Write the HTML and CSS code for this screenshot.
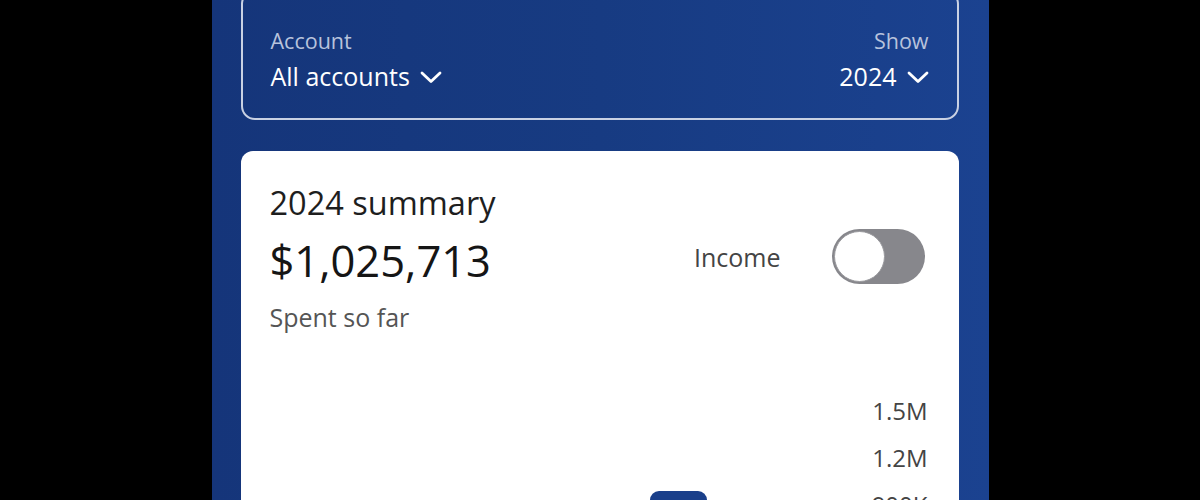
FILE: index.html
```html
<!DOCTYPE html>
<html lang="en">
<head>
<meta charset="utf-8">
<title>2024 summary</title>
<link rel="stylesheet" href="styles.css">
</head>
<body>
<div class="panel">
  <div class="filters">
    <div class="filter">
      <div class="filter-label">Account</div>
      <div class="filter-value">All accounts
        <svg class="chev" viewBox="0 0 22 13" width="22" height="13"><path d="M2 2 L11 10.5 L20 2" fill="none" stroke="#fff" stroke-width="2.8" stroke-linecap="round" stroke-linejoin="round"/></svg>
      </div>
    </div>
    <div class="filter filter-right">
      <div class="filter-label">Show</div>
      <div class="filter-value">2024
        <svg class="chev" viewBox="0 0 22 13" width="22" height="13"><path d="M2 2 L11 10.5 L20 2" fill="none" stroke="#fff" stroke-width="2.8" stroke-linecap="round" stroke-linejoin="round"/></svg>
      </div>
    </div>
  </div>

  <div class="card">
    <div class="card-title">2024 summary</div>
    <div class="amount-row">
      <div class="amount">$1,025,713</div>
      <div class="income">
        <span class="income-label">Income</span>
        <span class="toggle"><span class="knob"></span></span>
      </div>
    </div>
    <div class="caption">Spent so far</div>

    <div class="chart">
      <div class="plot">
        <div class="bar" style="height:155px"></div>
      </div>
      <div class="axis">
        <div>1.5M</div>
        <div>1.2M</div>
        <div>900K</div>
        <div>600K</div>
        <div>300K</div>
        <div>0</div>
      </div>
    </div>
  </div>
</div>
</body>
</html>
```
FILE: styles.css
```css
html, body {
  margin: 0;
  padding: 0;
  background: #000;
  height: 100%;
  overflow: hidden;
}

body {
  font-family: "Open Sans", "Noto Sans", "Liberation Sans", sans-serif;
}

.panel {
  width: 777px;
  min-height: 100%;
  margin: 0 auto;
  padding: 0 30px 0 29px;
  box-sizing: border-box;
  background: linear-gradient(90deg, #15357a 0%, #173b82 50%, #1b4290 100%);
}

.filters {
  margin-top: -10px;
  border: 2px solid #c9d1e3;
  border-radius: 14px;
  padding: 34px 28px 25px 28px;
  display: flex;
  justify-content: space-between;
  align-items: flex-start;
}

.filter {
  display: flex;
  flex-direction: column;
}

.filter-right {
  align-items: flex-end;
}

.filter-label {
  font-size: 21.5px;
  line-height: 30px;
  color: #b8c3dc;
}

.filter-value {
  margin-top: 3px;
  font-size: 25px;
  line-height: 34px;
  color: #fff;
  display: flex;
  align-items: center;
  gap: 10px;
}

.chev {
  display: block;
  margin-top: 2px;
}

.card {
  margin-top: 31px;
  background: #fff;
  border-radius: 12px 12px 0 0;
  padding: 32px 34px 0 29px;
  height: 400px;
  overflow: hidden;
}

.card-title {
  font-size: 32.5px;
  line-height: 40px;
  color: #1e1e1e;
}

.amount-row {
  margin-top: 12px;
  display: flex;
  justify-content: space-between;
  align-items: flex-start;
}

.amount {
  font-size: 43.5px;
  line-height: 52px;
  color: #151515;
}

.income {
  margin-top: -6px;
  display: flex;
  align-items: center;
  gap: 51px;
}

.income-label {
  font-size: 25px;
  line-height: 34px;
  color: #444;
}

.toggle {
  width: 93px;
  height: 55px;
  border-radius: 28px;
  background: #87878c;
  display: flex;
  align-items: center;
  padding: 0 2px;
  box-sizing: border-box;
}

.knob {
  width: 51px;
  height: 51px;
  border-radius: 50%;
  background: #fff;
  box-sizing: border-box;
  border: 1px solid #9a9a9e;
}

.caption {
  margin-top: 14px;
  font-size: 25px;
  line-height: 32px;
  color: #555;
}

.chart {
  margin-top: 54px;
  margin-right: -3px;
  display: flex;
  gap: 10px;
}

.plot {
  flex: 1;
  display: flex;
  justify-content: flex-end;
  align-items: flex-end;
  padding-right: 155px;
  padding-bottom: 23px;
}

.bar {
  width: 57px;
  background: #1a3f8a;
  border-radius: 9px 9px 0 0;
}

.axis {
  display: flex;
  flex-direction: column;
  align-items: flex-end;
  font-size: 24px;
  line-height: 47px;
  color: #444;
}
```
